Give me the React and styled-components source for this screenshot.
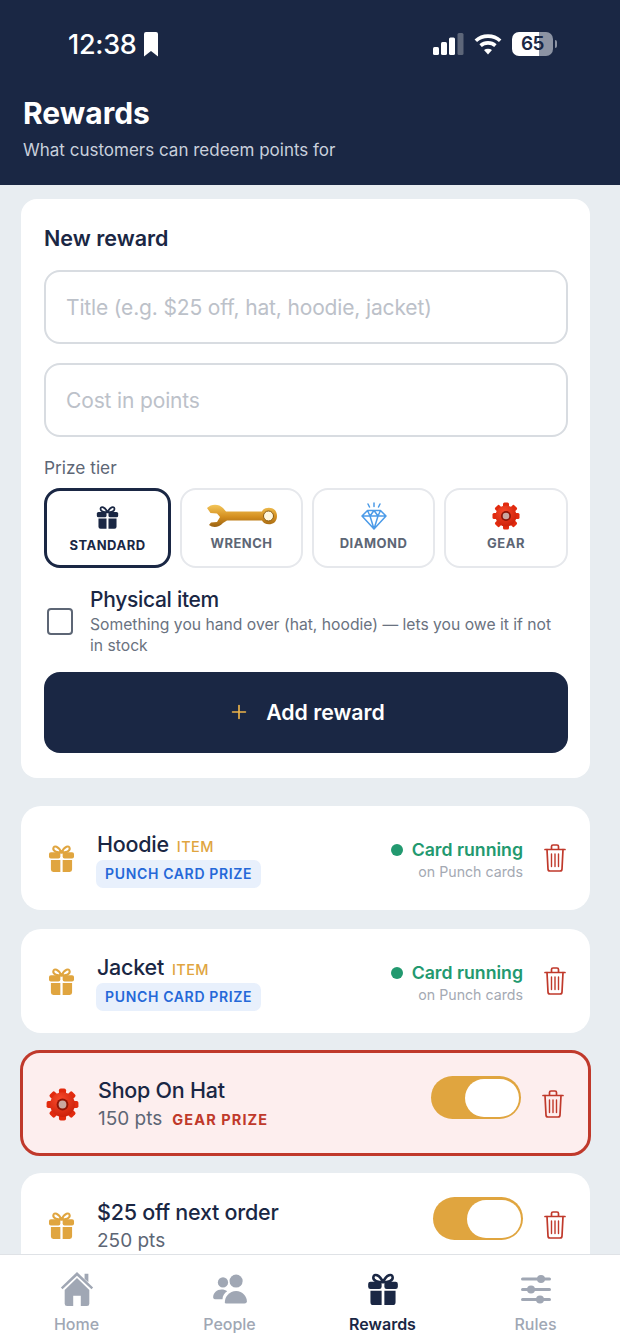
import React from 'react';
import styled, { createGlobalStyle } from 'styled-components';
import { Plus } from 'lucide-react';

const navy = '#1a2744';
const gold = '#e0a53f';
const red = '#c0392b';

const GlobalStyle = createGlobalStyle`
  * { box-sizing: border-box; }
  html, body { margin: 0; padding: 0; }
  body { font-family: Inter, "Liberation Sans", sans-serif; background: #e8edf1; }
`;

const Screen = styled.div`
  width: 620px;
  height: 1344px;
  display: flex;
  flex-direction: column;
  overflow: hidden;
  background: #e8edf1;
`;

const Header = styled.header`
  height: 185px;
  flex: none;
  background: ${navy};
  color: #fff;
  padding: 28px 23px 0;
`;

const StatusBar = styled.div`
  height: 32px;
  display: flex;
  align-items: center;
  justify-content: space-between;
  padding: 0 44px 0 45px;
`;

const Clock = styled.div`
  display: flex;
  align-items: center;
  gap: 8px;
  font-size: 27px;
  font-weight: 500;
  letter-spacing: -0.3px;
`;

const StatusIcons = styled.div`
  display: flex;
  align-items: center;
  gap: 10px;
`;

const Battery = styled.div`
  position: relative;
  width: 41px;
  height: 24px;
  border-radius: 7px;
  background: linear-gradient(90deg, #fff 0 65%, #8c93a3 65% 100%);
  color: ${navy};
  font-size: 19px;
  font-weight: 600;
  line-height: 24px;
  letter-spacing: -0.5px;
  text-align: center;
  &::after {
    content: '';
    position: absolute;
    right: -4px;
    top: 8px;
    width: 2px;
    height: 8px;
    border-radius: 0 2px 2px 0;
    background: #8c93a3;
  }
`;

const Title = styled.h1`
  margin: 34px 0 0;
  font-size: 30px;
  line-height: 38px;
  font-weight: 700;
`;

const Subtitle = styled.p`
  margin: 7px 0 0;
  font-size: 17px;
  line-height: 22px;
  color: #c9d0dc;
`;

const Content = styled.main`
  flex: 1;
  min-height: 0;
  overflow: hidden;
  padding: 14px 30px 0 21px;
  width: 620px;
`;

const FormCard = styled.section`
  height: 579px;
  background: #fff;
  border-radius: 16px;
  padding: 23px 22px 0 23px;
  margin-bottom: 28px;
`;

const FormTitle = styled.h2`
  margin: 0 0 16px;
  font-size: 21.5px;
  line-height: 32px;
  font-weight: 600;
  color: ${navy};
`;

const Field = styled.input`
  display: block;
  width: 100%;
  height: 74px;
  margin-bottom: 19px;
  padding: 0 20px;
  border: 2px solid #d8dce1;
  border-radius: 16px;
  background: #fff;
  font: 400 21px Inter, "Liberation Sans", sans-serif;
  letter-spacing: -0.15px;
  &::placeholder { color: #bcc1c9; opacity: 1; }
`;

const FieldLabel = styled.div`
  font-size: 17.3px;
  line-height: 22px;
  color: #5d6675;
  margin-top: 20px;
  margin-bottom: 9px;
`;

const Tiers = styled.div`
  display: grid;
  grid-template-columns: 127px 123px 123px 124px;
  gap: 9px;
`;

const Tier = styled.button`
  height: 80px;
  padding: ${p => (p.$active ? '0' : '0 0 3px')};
  display: flex;
  flex-direction: column;
  align-items: center;
  justify-content: center;
  gap: 5px;
  background: #fff;
  border: ${p => (p.$active ? `3px solid ${navy}` : '2px solid #e6e8ec')};
  border-radius: 16px;
  font: 700 13px Inter, "Liberation Sans", sans-serif;
  letter-spacing: 0.5px;
  color: ${p => (p.$active ? navy : '#5d6675')};
`;

const TierIcon = styled.span`
  height: 28px;
  display: flex;
  align-items: center;
  justify-content: center;
`;

const PhysicalRow = styled.div`
  display: flex;
  align-items: center;
  gap: 17px;
  margin: 18px 0 16px 3px;
`;

const Checkbox = styled.span`
  flex: none;
  width: 26px;
  height: 27px;
  border: 2px solid #5d6675;
  border-radius: 4px;
`;

const PhysicalText = styled.div`
  min-width: 0;
`;

const PhysicalTitle = styled.div`
  font-size: 21px;
  line-height: 28px;
  font-weight: 500;
  letter-spacing: -0.3px;
  color: ${navy};
`;

const PhysicalHint = styled.div`
  font-size: 15.7px;
  line-height: 21px;
  color: #6a7280;
`;

const AddButton = styled.button`
  width: 100%;
  height: 81px;
  display: flex;
  align-items: center;
  justify-content: center;
  gap: 16px;
  padding: 0 0 2px 1px;
  border: 0;
  border-radius: 16px;
  background: ${navy};
  color: #fff;
  font: 600 21.3px Inter, "Liberation Sans", sans-serif;
`;

const RewardList = styled.div`
  display: flex;
  flex-direction: column;
  gap: 19px;
`;

const Row = styled.article`
  display: flex;
  align-items: center;
  flex: none;
  height: ${p => (p.$alert ? '106px' : '104px')};
  padding: ${p => (p.$alert ? '2px 24px 0 21px' : '0 24px 0 22px')};
  border-radius: 20px;
  background: ${p => (p.$alert ? '#fdeeee' : '#fff')};
  border: ${p => (p.$alert ? `3px solid ${red}` : '0')};
  margin: ${p => (p.$alert ? '-2px -1px' : '0')};
`;

const RowIcon = styled.span`
  width: 36px;
  flex: none;
  display: flex;
  justify-content: center;
  margin-right: 18px;
`;

const RowBody = styled.div`
  flex: 1;
  min-width: 0;
`;

const RowTitle = styled.div`
  display: flex;
  align-items: baseline;
  gap: 8px;
  font-size: 21.5px;
  line-height: 30px;
  font-weight: 500;
  letter-spacing: -0.25px;
  color: ${navy};
`;

const ItemTag = styled.span`
  font-size: 14.5px;
  font-weight: 500;
  letter-spacing: 0.4px;
  color: ${gold};
`;

const PrizeTag = styled.span`
  display: inline-block;
  height: 28px;
  margin: -2px 0 0 -1px;
  padding: 0 9px;
  border-radius: 7px;
  background: #e8f0fc;
  color: #2568d8;
  font-size: 14px;
  font-weight: 600;
  line-height: 28px;
  letter-spacing: 0.65px;
`;

const Meta = styled.div`
  display: flex;
  align-items: baseline;
  gap: 10px;
  margin-top: 1px;
  font-size: 19px;
  line-height: 26px;
  color: #5d6675;
`;

const GearTag = styled.span`
  font-size: 14.5px;
  font-weight: 700;
  letter-spacing: 1.1px;
  color: ${red};
`;

const RunningState = styled.div`
  text-align: right;
  margin: 4px 21px 0 0;
`;

const RunningLabel = styled.div`
  display: flex;
  align-items: center;
  gap: 9px;
  font-size: 17.7px;
  line-height: 24px;
  font-weight: 600;
  color: #22996f;
  &::before {
    content: '';
    width: 12px;
    height: 12px;
    border-radius: 50%;
    background: #22996f;
  }
`;

const RunningHint = styled.div`
  font-size: 14.2px;
  line-height: 20px;
  color: #a4a9b3;
`;

const Toggle = styled.span`
  width: 90px;
  height: 43px;
  flex: none;
  margin: 0 21px 13px 0;
  padding: 2.500px;
  display: flex;
  justify-content: flex-end;
  border-radius: 22px;
  background: ${gold};
  &::after {
    content: '';
    width: 54px;
    height: 38px;
    border-radius: 19px;
    background: #fff;
  }
`;

const DeleteButton = styled.span`
  display: flex;
  color: ${red};
`;

const TabBar = styled.nav`
  height: 90px;
  flex: none;
  display: grid;
  grid-template-columns: repeat(4, 153px);
  background: #fff;
  border-top: 1px solid #dfe2e6;
`;

const Tab = styled.div`
  display: flex;
  flex-direction: column;
  align-items: center;
  padding-top: 15px;
  font-size: 16px;
  line-height: 20px;
  font-weight: ${p => (p.$active ? 600 : 500)};
  color: ${p => (p.$active ? navy : '#a0a7b4')};
`;

const TabIcon = styled.span`
  height: 38px;
  margin-bottom: 6px;
  display: flex;
  align-items: center;
`;

const GiftIcon = ({ size = 30, color = gold }) => (
  <svg width={size} height={size * 1.07} viewBox="0 0 28 30" fill="none">
    <path d="M14 9C11 2 6 1 5.500 4.600 5.200 8 10 9 14 9ZM14 9c3-7 8-8 8.500-4.400C22.800 8 18 9 14 9Z" stroke={color} strokeWidth="2.200" />
    <rect x="1" y="8.500" width="11.800" height="6.500" rx="2" fill={color} />
    <rect x="15.200" y="8.500" width="11.800" height="6.500" rx="2" fill={color} />
    <path d="M3 16.500h9.800V29H5.500A2.500 2.500 0 0 1 3 26.500ZM15.200 16.500H25v10a2.500 2.500 0 0 1-2.500 2.500h-7.300Z" fill={color} />
  </svg>
);

const WrenchIcon = () => (
  <svg width="72" height="26" viewBox="0 0 72 26">
    <defs>
      <linearGradient id="wrenchGold" x1="0" y1="0" x2="0" y2="1">
        <stop offset="0" stopColor="#f3c65a" />
        <stop offset="0.55" stopColor="#d48f1f" />
        <stop offset="1" stopColor="#9a6212" />
      </linearGradient>
    </defs>
    <path d="M1 5C5 .5 13 .5 17 5L20 8.500H56C58 3 71 2.500 71 13S58 23 56 17.500H21L17 20C13 24.500 7 25 3 22L5 19.500 11 19 14 14 11 10.500 4.500 10Z" fill="url(#wrenchGold)" />
    <circle cx="62.500" cy="13" r="5" fill="#fff6dc" stroke="#8a5a10" strokeWidth="1" />
  </svg>
);

const DiamondIcon = () => (
  <svg width="26" height="28" viewBox="0 0 26 28" fill="none" stroke="#4c9be8" strokeWidth="1.500" strokeLinejoin="round">
    <path d="M6.500 8.500h13L25 14 13 27 1 14ZM1 14h24M9 14l4 13 4-13M6.500 8.500 9 14l4-5.500L17 14l2.500-5.500" />
    <path d="M13 1v3.500M7 2l1.500 3M19 2l-1.500 3" strokeLinecap="round" />
  </svg>
);

const GearIcon = ({ size = 28 }) => {
  const teeth = [0, 45, 90, 135, 180, 225, 270, 315];
  return (
    <svg width={size} height={size} viewBox="0 0 28 28">
      <defs>
        <radialGradient id="gearRed" cx="0.4" cy="0.3" r="0.8">
          <stop offset="0" stopColor="#f8492a" />
          <stop offset="1" stopColor="#c81c06" />
        </radialGradient>
      </defs>
      {teeth.map(a => (
        <rect key={a} x="11" y="0.500" width="6" height="7" rx="1.500" fill="#e22a0e" transform={`rotate(${a} 14 14)`} />
      ))}
      <circle cx="14" cy="14" r="10.500" fill="url(#gearRed)" />
      <circle cx="14" cy="14" r="5" fill="#8f1506" />
      <circle cx="14" cy="14" r="3.300" fill="#c9a7a0" />
    </svg>
  );
};

const TrashIcon = () => (
  <svg width="22" height="28" viewBox="0 0 22 28" fill="none" stroke="currentColor" strokeWidth="1.700" strokeLinecap="round" strokeLinejoin="round">
    <path d="M1 5.500h20M7.500 5V2.500A1.500 1.500 0 0 1 9 1h4a1.500 1.500 0 0 1 1.500 1.500V5" />
    <path d="M3 5.500l1 19.500a2 2 0 0 0 2 2h10a2 2 0 0 0 2-2l1-19.500" />
    <path d="M7.500 10v12.500M11 10v12.500M14.500 10v12.500" strokeWidth="1.400" />
  </svg>
);

const HomeIcon = () => (
  <svg width="36" height="36" viewBox="0 0 36 38" fill="#a0a7b4">
    <path d="M18 1 35 17.500l-1.700 1.800L18 5 2.700 19.300 1 17.500ZM26 3h4v9l-4-3.800Z" />
    <path d="M18 7.500 31 20v14.500a2.500 2.500 0 0 1-2.500 2.500H22V26h-8v11H7.500A2.500 2.500 0 0 1 5 34.500V20Z" />
  </svg>
);

const PeopleIcon = () => (
  <svg width="36" height="30" viewBox="0 0 36 32" fill="#a0a7b4">
    <circle cx="10.500" cy="9" r="5.500" />
    <circle cx="24.500" cy="7.500" r="7" />
    <path d="M0 25c0-5 4-8.500 9-8.500 2.500 0 4.500.7 6 2-3 2-5 5-5 8.500H2.500A2.500 2.500 0 0 1 0 25Z" />
    <path d="M12.500 31c-.5-7 5-13 12-13s11.500 6 11.500 11a2.500 2.500 0 0 1-2.500 2.500h-20Z" />
  </svg>
);

const RulesIcon = () => (
  <svg width="32" height="32" viewBox="0 0 32 32" fill="#a0a7b4">
    <rect x="1" y="4.500" width="30" height="3" rx="1.500" />
    <rect x="1" y="15" width="30" height="3" rx="1.500" />
    <rect x="1" y="25" width="30" height="3" rx="1.500" />
    <circle cx="21" cy="6" r="4" />
    <circle cx="11" cy="16.500" r="4" />
    <circle cx="20" cy="26.500" r="4" />
  </svg>
);

const SignalIcon = () => (
  <svg width="31" height="22" viewBox="0 0 31 22">
    <rect x="0" y="14" width="6" height="8" rx="1.500" fill="#fff" />
    <rect x="8" y="9" width="6" height="13" rx="1.500" fill="#fff" />
    <rect x="16" y="4.500" width="6" height="17.500" rx="1.500" fill="#fff" />
    <rect x="24.500" y="0" width="6" height="22" rx="1.500" fill="#5d6679" />
  </svg>
);

const WifiIcon = () => (
  <svg width="28" height="22" viewBox="0 0 28 22" fill="none" stroke="#fff" strokeWidth="3.600">
    <path d="M1.800 7.800C8.500 1.600 19.500 1.600 26.200 7.800" />
    <path d="M6.600 12.600c4.200-3.700 10.600-3.700 14.800 0" />
    <path d="M14 21.500 10 17c2.300-1.700 5.700-1.700 8 0Z" fill="#fff" stroke="none" />
  </svg>
);

const BookmarkIcon = () => (
  <svg width="14" height="25" viewBox="0 0 14 25" fill="#fff">
    <path d="M2 0h10a2 2 0 0 1 2 2v22.500L7 19 0 24.500V2a2 2 0 0 1 2-2Z" />
  </svg>
);

const App = () => (
  <Screen>
    <GlobalStyle />
    <Header>
      <StatusBar>
        <Clock>
          12:38
          <BookmarkIcon />
        </Clock>
        <StatusIcons>
          <SignalIcon />
          <WifiIcon />
          <Battery>65</Battery>
        </StatusIcons>
      </StatusBar>
      <Title>Rewards</Title>
      <Subtitle>What customers can redeem points for</Subtitle>
    </Header>

    <Content>
      <FormCard>
        <FormTitle>New reward</FormTitle>
        <Field placeholder="Title (e.g. $25 off, hat, hoodie, jacket)" />
        <Field placeholder="Cost in points" />
        <FieldLabel>Prize tier</FieldLabel>
        <Tiers>
          <Tier $active>
            <TierIcon><GiftIcon size={23} color={navy} /></TierIcon>
            STANDARD
          </Tier>
          <Tier>
            <TierIcon><WrenchIcon /></TierIcon>
            WRENCH
          </Tier>
          <Tier>
            <TierIcon><DiamondIcon /></TierIcon>
            DIAMOND
          </Tier>
          <Tier>
            <TierIcon><GearIcon /></TierIcon>
            GEAR
          </Tier>
        </Tiers>
        <PhysicalRow>
          <Checkbox />
          <PhysicalText>
            <PhysicalTitle>Physical item</PhysicalTitle>
            <PhysicalHint>Something you hand over (hat, hoodie) — lets you owe it if not in stock</PhysicalHint>
          </PhysicalText>
        </PhysicalRow>
        <AddButton>
          <Plus size={22} color="#edb44a" strokeWidth={1.800} />
          Add reward
        </AddButton>
      </FormCard>

      <RewardList>
        {['Hoodie', 'Jacket'].map(name => (
          <Row key={name}>
            <RowIcon><GiftIcon size={27} /></RowIcon>
            <RowBody>
              <RowTitle>
                {name}
                <ItemTag>ITEM</ItemTag>
              </RowTitle>
              <PrizeTag>PUNCH CARD PRIZE</PrizeTag>
            </RowBody>
            <RunningState>
              <RunningLabel>Card running</RunningLabel>
              <RunningHint>on Punch cards</RunningHint>
            </RunningState>
            <DeleteButton><TrashIcon /></DeleteButton>
          </Row>
        ))}
        <Row $alert>
          <RowIcon><GearIcon size={33} /></RowIcon>
          <RowBody>
            <RowTitle>Shop On Hat</RowTitle>
            <Meta>
              150 pts
              <GearTag>GEAR PRIZE</GearTag>
            </Meta>
          </RowBody>
          <Toggle />
          <DeleteButton><TrashIcon /></DeleteButton>
        </Row>
        <Row>
          <RowIcon><GiftIcon size={27} /></RowIcon>
          <RowBody>
            <RowTitle>$25 off next order</RowTitle>
            <Meta>250 pts</Meta>
          </RowBody>
          <Toggle />
          <DeleteButton><TrashIcon /></DeleteButton>
        </Row>
      </RewardList>
    </Content>

    <TabBar>
      <Tab>
        <TabIcon><HomeIcon /></TabIcon>
        Home
      </Tab>
      <Tab>
        <TabIcon><PeopleIcon /></TabIcon>
        People
      </Tab>
      <Tab $active>
        <TabIcon><GiftIcon size={32} color={navy} /></TabIcon>
        Rewards
      </Tab>
      <Tab>
        <TabIcon><RulesIcon /></TabIcon>
        Rules
      </Tab>
    </TabBar>
  </Screen>
);

export default App;
